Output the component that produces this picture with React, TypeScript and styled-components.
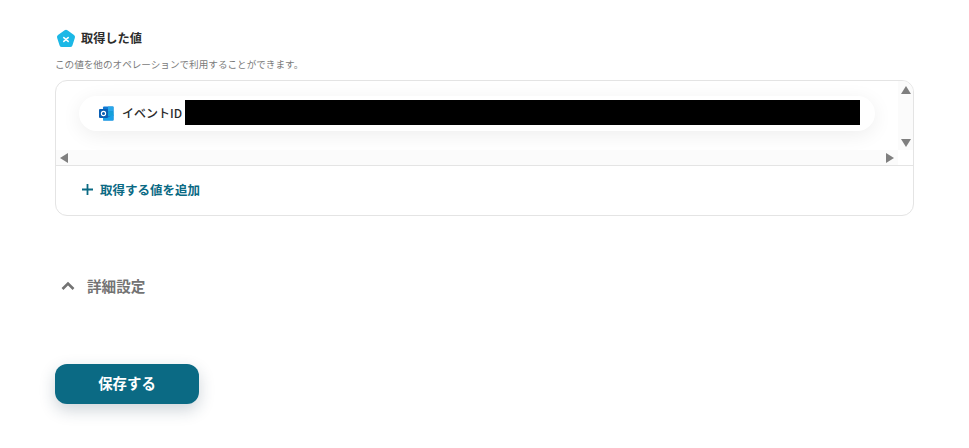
import React from 'react'
import styled, { createGlobalStyle } from 'styled-components'

const GlobalStyle = createGlobalStyle`
  html, body {
    margin: 0;
    background: #fff;
    font-family: "Noto Sans CJK JP", "Noto Sans", "Liberation Sans", sans-serif;
  }
`

const Page = styled.div`
  width: 969px;
  height: 448px;
  padding: 28px 55px 0;
  box-sizing: border-box;
  overflow: hidden;
`

const TitleRow = styled.div`
  display: flex;
  align-items: center;
  gap: 5px;
  height: 21px;
  padding-left: 1px;
`

const Title = styled.h2`
  margin: 0;
  font-size: 12.2px;
  line-height: 21px;
  font-weight: 700;
  color: #2c2c2c;
`

const Hint = styled.p`
  margin: 8px 0 0;
  font-size: 9.6px;
  line-height: 14px;
  color: #7b7b7b;
`

const Card = styled.div`
  margin-top: 9px;
  width: 859px;
  height: 136px;
  box-sizing: border-box;
  border: 1px solid #e4e4e4;
  border-radius: 12px;
  overflow: hidden;
  display: flex;
  flex-direction: column;
`

const ScrollArea = styled.div`
  height: 84px;
  flex: none;
  display: grid;
  grid-template-columns: 1fr 15px;
  grid-template-rows: 69px 15px;
  border-bottom: 1px solid #e4e4e4;
`

const Viewport = styled.div`
  padding: 15px 23px 0 23px;
  overflow: hidden;
`

const Pill = styled.div`
  height: 35px;
  border-radius: 18px;
  background: #fff;
  box-shadow: 0 4px 20px rgba(0, 0, 0, 0.07);
  display: flex;
  align-items: center;
  padding: 0 15px 0 20px;
`

const PillLabel = styled.span`
  margin: -2px 0 0 8px;
  font-size: 12px;
  font-weight: 500;
  line-height: 35px;
  color: #2c2c2c;
  white-space: nowrap;
`

const Redacted = styled.div`
  flex: 1;
  height: 25px;
  margin-left: 3px;
  margin-top: -2px;
  background: #000;
`

const VerticalBar = styled.div`
  background: #fbfbfb;
  display: flex;
  flex-direction: column;
  align-items: center;
  justify-content: space-between;
  padding: 5px 0 3px;
`

const HorizontalBar = styled.div`
  background: #fbfbfb;
  display: flex;
  align-items: center;
  justify-content: space-between;
  padding: 0 4px 0 4px;
`

const Corner = styled.div`
  background: #fff;
`

const Arrow = styled.span<{ $dir: 'up' | 'down' | 'left' | 'right' }>`
  width: 0;
  height: 0;
  border-style: solid;
  border-color: transparent;
  ${({ $dir }) =>
    $dir === 'up'
      ? 'border-width: 0 5px 8px; border-bottom-color: #7f7f7f;'
      : $dir === 'down'
      ? 'border-width: 8px 5px 0; border-top-color: #7f7f7f;'
      : $dir === 'left'
      ? 'border-width: 5px 8px 5px 0; border-right-color: #7f7f7f;'
      : 'border-width: 5px 0 5px 8px; border-left-color: #7f7f7f;'}
`

const AddRow = styled.button`
  display: flex;
  align-items: center;
  gap: 6px;
  height: 49px;
  padding: 0 0 3px 25px;
  border: 0;
  background: none;
  font: inherit;
  font-size: 12.5px;
  font-weight: 700;
  color: #0b6a84;
`

const Details = styled.div`
  margin-top: 59px;
  display: flex;
  align-items: center;
  gap: 12px;
  height: 21px;
  padding-left: 6px;
  font-size: 14.6px;
  font-weight: 700;
  color: #737373;
`

const SaveButton = styled.button`
  display: block;
  margin-top: 68px;
  width: 144px;
  height: 40px;
  border: 0;
  padding: 0 0 3px;
  border-radius: 12px;
  background: #0b6a84;
  color: #fff;
  font: inherit;
  font-size: 14.4px;
  font-weight: 700;
  box-shadow: 0 6px 16px rgba(30, 60, 80, 0.22);
`

const AppBadge = () => (
  <svg width="20" height="20" viewBox="0 0 20 20">
    <path d="M8.6 1.2a2.4 2.4 0 0 1 2.8 0l6.6 4.8a2.4 2.4 0 0 1 .9 2.7l-2.5 7.7a2.4 2.4 0 0 1-2.3 1.7H5.9a2.4 2.4 0 0 1-2.3-1.7L1.1 8.7A2.4 2.4 0 0 1 2 6z" fill="#1cb8e6" />
    <path d="M7.8 8.6 12.2 12.4M12.2 8.6 7.8 12.4" stroke="#fff" strokeWidth="1.5" strokeLinecap="round" />
  </svg>
)

const OutlookIcon = () => (
  <svg width="15" height="15" viewBox="0 0 15 15">
    <rect x="4" y="0.5" width="10.5" height="14" rx="1" fill="#0f78d4" />
    <rect x="9" y="0.5" width="5.5" height="5" fill="#28a8ea" />
    <rect x="9" y="5.5" width="5.5" height="4.5" fill="#14a0d8" />
    <path d="M4 9l5 2.5 5.5-3v6H4z" fill="#1aa1e8" />
    <rect x="0" y="3" width="9" height="9" rx="1" fill="#0a5fb4" />
    <circle cx="4.5" cy="7.5" r="2.1" fill="none" stroke="#fff" strokeWidth="1.1" />
  </svg>
)

const PlusIcon = () => (
  <svg width="13" height="13" viewBox="0 0 13 13">
    <path d="M6.5 1v11M1 6.5h11" stroke="#0b6a84" strokeWidth="1.8" />
  </svg>
)

const ChevronUp = () => (
  <svg width="14" height="10" viewBox="0 0 14 10">
    <path d="M1.5 8 7 2.5 12.5 8" fill="none" stroke="#737373" strokeWidth="2.6" />
  </svg>
)

export default function App() {
  return (
    <Page>
      <GlobalStyle />
      <TitleRow>
        <AppBadge />
        <Title>取得した値</Title>
      </TitleRow>
      <Hint>この値を他のオペレーションで利用することができます。</Hint>
      <Card>
        <ScrollArea>
          <Viewport>
            <Pill>
              <OutlookIcon />
              <PillLabel>イベントID</PillLabel>
              <Redacted />
            </Pill>
          </Viewport>
          <VerticalBar>
            <Arrow $dir="up" />
            <Arrow $dir="down" />
          </VerticalBar>
          <HorizontalBar>
            <Arrow $dir="left" />
            <Arrow $dir="right" />
          </HorizontalBar>
          <Corner />
        </ScrollArea>
        <AddRow>
          <PlusIcon />
          取得する値を追加
        </AddRow>
      </Card>
      <Details>
        <ChevronUp />
        詳細設定
      </Details>
      <SaveButton>保存する</SaveButton>
    </Page>
  )
}
